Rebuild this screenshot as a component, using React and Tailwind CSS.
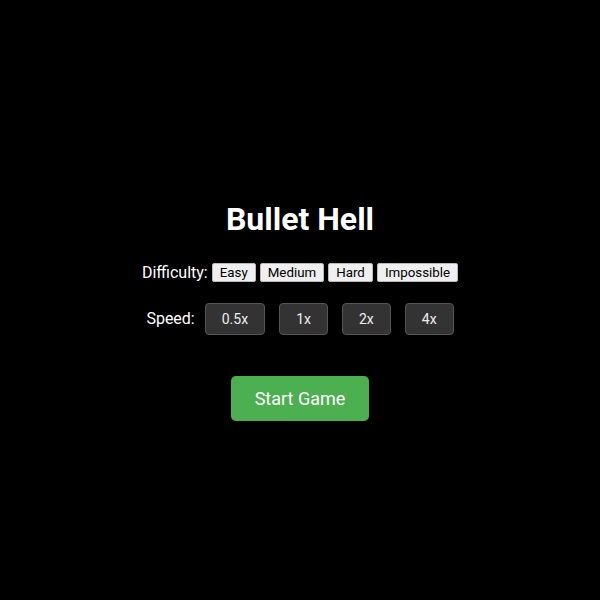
import React, { useState } from 'react';

const difficulties = ['Easy', 'Medium', 'Hard', 'Impossible'];
const speeds = ['0.5x', '1x', '2x', '4x'];

export default function App() {
  const [difficulty, setDifficulty] = useState('Easy');
  const [speed, setSpeed] = useState('1x');

  return (
    <div className="flex min-h-[600px] flex-col items-center justify-center bg-black pt-[22px] text-white font-['Roboto',sans-serif]">
      <h1 className="text-[32px] font-bold leading-[37.5px]">Bullet Hell</h1>

      <div className="mt-[22px] flex items-center gap-[4px] text-[16px]">
        <span>Difficulty:</span>
        {difficulties.map((d) => (
          <button
            key={d}
            onClick={() => setDifficulty(d)}
            className="rounded-[2px] border border-[#b9b9b9] bg-[#efefef] px-[7px] py-px text-[13.33px] leading-[15.6px] text-black"
          >
            {d}
          </button>
        ))}
      </div>

      <div className="mt-[18px] flex items-center text-[16px]">
        <span className="mr-[10px]">Speed:</span>
        <div className="flex gap-[14px]">
          {speeds.map((s) => (
            <button
              key={s}
              onClick={() => setSpeed(s)}
              className="rounded-[4px] border border-[#555] bg-[#333] px-[16px] py-[7px] text-[14px] leading-[16.5px] text-[#eee]"
            >
              {s}
            </button>
          ))}
        </div>
      </div>

      <button className="mt-[41px] rounded-[5px] bg-[#4caf50] px-[24px] py-[12px] text-[18px] leading-[21px] text-white">
        Start Game
      </button>
    </div>
  );
}
